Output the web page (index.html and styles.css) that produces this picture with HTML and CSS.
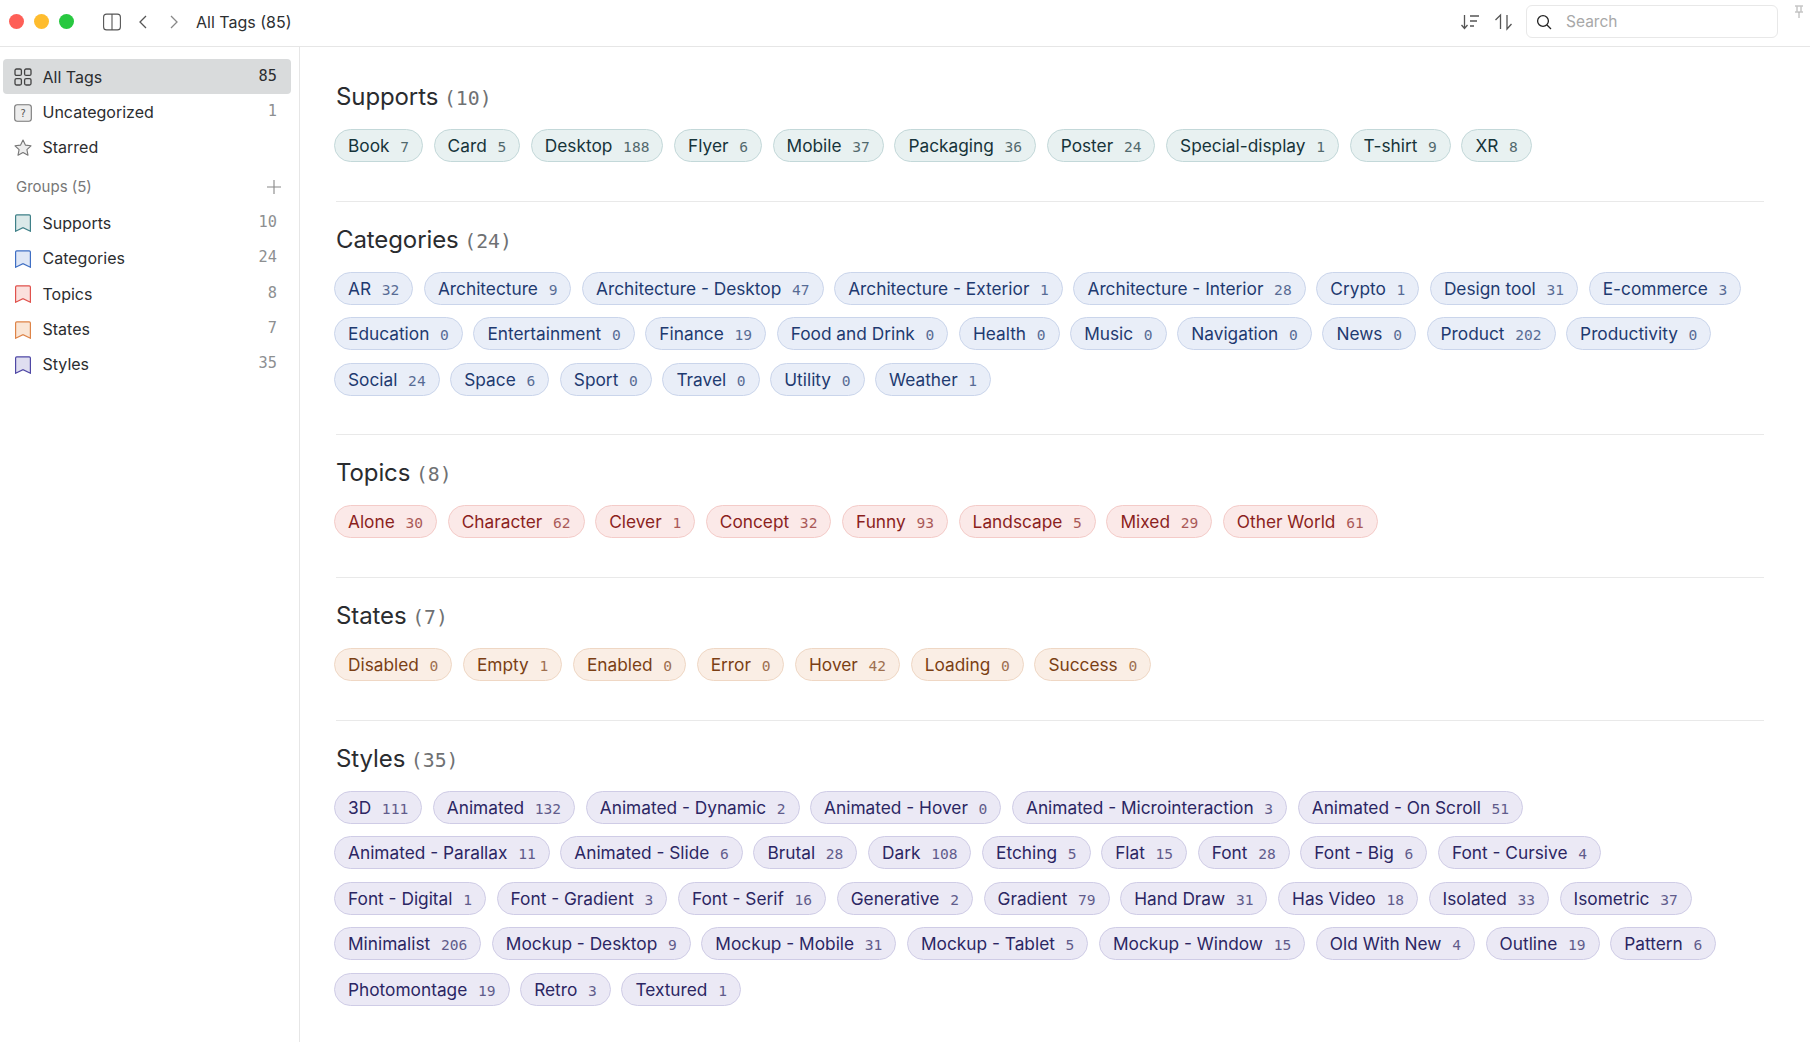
FILE: index.html
```html
<!DOCTYPE html>
<html lang="en">
<head>
<meta charset="utf-8">
<title>All Tags (85)</title>
<link rel="stylesheet" href="styles.css">
</head>
<body>
<div class="app">
  <header class="toolbar">
    <div class="lights"><span class="light red"></span><span class="light yellow"></span><span class="light green"></span></div>
    <svg class="tb-icon panel" viewBox="0 0 18 18" width="18" height="18"><rect x="0.6" y="1.1" width="16.8" height="15.8" rx="3" fill="none" stroke="#555" stroke-width="1.1"/><path d="M9 1.1V16.9" stroke="#555" stroke-width="1.1"/></svg>
    <svg class="tb-icon back" viewBox="0 0 10 16" width="10" height="16"><path d="M8 2 2 8l6 6" fill="none" stroke="#555" stroke-width="1.3"/></svg>
    <svg class="tb-icon fwd" viewBox="0 0 10 16" width="10" height="16"><path d="M2 2l6 6-6 6" fill="none" stroke="#888" stroke-width="1.3"/></svg>
    <div class="tb-title">All Tags (85)</div>
    <svg class="tb-icon sort1" viewBox="0 0 20 18" width="20" height="18"><path d="M4.500 2v13M1.500 12l3 3.500 3-3.500" fill="none" stroke="#555" stroke-width="1.300"/><path d="M10 3h9M10 8h7M10 13h4" stroke="#555" stroke-width="1.300"/></svg>
    <svg class="tb-icon sort2" viewBox="0 0 20 18" width="20" height="18"><path d="M6.500 16V2L1.500 7" fill="none" stroke="#555" stroke-width="1.300"/><path d="M13 2v14l4.500-5" fill="none" stroke="#555" stroke-width="1.300"/></svg>
    <div class="search">
      <svg viewBox="0 0 16 16" width="16" height="16"><circle cx="7" cy="7" r="5.4" fill="none" stroke="#222" stroke-width="1.3"/><path d="M11 11l4 4" stroke="#222" stroke-width="1.3"/></svg>
      <span>Search</span>
    </div>
    <svg class="pin" viewBox="0 0 10 14" width="10" height="14"><path d="M1 1h8M3 1.500v5M7 1.500v5M1 7h8M5 7v6" fill="none" stroke="#aaa" stroke-width="1"/></svg>
  </header>
  <div class="body">
    <aside class="sidebar">
      <div class="row active">
        <svg class="ico" viewBox="0 0 18 18" width="18" height="18"><g fill="none" stroke="#444" stroke-width="1.3"><rect x="1" y="1" width="6.400" height="6.400" rx="1.500"/><rect x="10.600" y="1" width="6.400" height="6.400" rx="1.500"/><rect x="1" y="10.600" width="6.400" height="6.400" rx="1.500"/><rect x="10.600" y="10.600" width="6.400" height="6.400" rx="1.500"/></g></svg>
        <span class="lbl">All Tags</span><span class="num dark">85</span>
      </div>
      <div class="row">
        <svg class="ico" viewBox="0 0 18 18" width="18" height="18"><rect x="0.7" y="0.7" width="16.600" height="16.600" rx="2.500" fill="#ededed" stroke="#777" stroke-width="1.100"/><text x="9" y="12.500" class="q">?</text></svg>
        <span class="lbl">Uncategorized</span><span class="num">1</span>
      </div>
      <div class="row">
        <svg class="ico" viewBox="0 0 18 18" width="18" height="18"><path d="M9 1l2.400 5.100 5.600.7-4.100 3.900 1.100 5.500L9 13.500l-5 2.700 1.100-5.500L1 6.800l5.600-.7z" fill="#ededed" stroke="#777" stroke-width="1.100" stroke-linejoin="round"/></svg>
        <span class="lbl">Starred</span>
      </div>
      <div class="groups"><span>Groups (5)</span><svg viewBox="0 0 14 14" width="14" height="14"><path d="M7 0v14M0 7h14" stroke="#888" stroke-width="1.100"/></svg></div>
      <div class="row"><svg class="ico mark teal" viewBox="0 0 18 18" width="18" height="18"><path d="M1.600 2q0-1.200 1.200-1.200h12.400q1.200 0 1.200 1.200v15.200l-7.400-3.600-7.400 3.600z"/></svg><span class="lbl">Supports</span><span class="num">10</span></div>
      <div class="row"><svg class="ico mark blue" viewBox="0 0 18 18" width="18" height="18"><path d="M1.600 2q0-1.200 1.200-1.200h12.400q1.200 0 1.200 1.200v15.200l-7.400-3.600-7.400 3.600z"/></svg><span class="lbl">Categories</span><span class="num">24</span></div>
      <div class="row"><svg class="ico mark rose" viewBox="0 0 18 18" width="18" height="18"><path d="M1.600 2q0-1.200 1.200-1.200h12.400q1.200 0 1.200 1.200v15.200l-7.400-3.600-7.400 3.600z"/></svg><span class="lbl">Topics</span><span class="num">8</span></div>
      <div class="row"><svg class="ico mark amber" viewBox="0 0 18 18" width="18" height="18"><path d="M1.600 2q0-1.200 1.200-1.200h12.400q1.200 0 1.200 1.200v15.200l-7.400-3.600-7.400 3.600z"/></svg><span class="lbl">States</span><span class="num">7</span></div>
      <div class="row"><svg class="ico mark violet" viewBox="0 0 18 18" width="18" height="18"><path d="M1.600 2q0-1.200 1.200-1.200h12.400q1.200 0 1.200 1.200v15.200l-7.400-3.600-7.400 3.600z"/></svg><span class="lbl">Styles</span><span class="num">35</span></div>
    </aside>
    <main class="main">
      <section class="group teal">
        <h2>Supports <span>(10)</span></h2>
        <div class="chips">
          <a class="chip">Book<i>7</i></a><a class="chip">Card<i>5</i></a><a class="chip">Desktop<i>188</i></a><a class="chip">Flyer<i>6</i></a><a class="chip">Mobile<i>37</i></a><a class="chip">Packaging<i>36</i></a><a class="chip">Poster<i>24</i></a><a class="chip">Special-display<i>1</i></a><a class="chip">T-shirt<i>9</i></a><a class="chip">XR<i>8</i></a>
        </div>
      </section>
      <section class="group blue">
        <h2>Categories <span>(24)</span></h2>
        <div class="chips">
          <a class="chip">AR<i>32</i></a><a class="chip">Architecture<i>9</i></a><a class="chip">Architecture - Desktop<i>47</i></a><a class="chip">Architecture - Exterior<i>1</i></a><a class="chip">Architecture - Interior<i>28</i></a><a class="chip">Crypto<i>1</i></a><a class="chip">Design tool<i>31</i></a><a class="chip">E-commerce<i>3</i></a><a class="chip">Education<i>0</i></a><a class="chip">Entertainment<i>0</i></a><a class="chip">Finance<i>19</i></a><a class="chip">Food and Drink<i>0</i></a><a class="chip">Health<i>0</i></a><a class="chip">Music<i>0</i></a><a class="chip">Navigation<i>0</i></a><a class="chip">News<i>0</i></a><a class="chip">Product<i>202</i></a><a class="chip">Productivity<i>0</i></a><a class="chip">Social<i>24</i></a><a class="chip">Space<i>6</i></a><a class="chip">Sport<i>0</i></a><a class="chip">Travel<i>0</i></a><a class="chip">Utility<i>0</i></a><a class="chip">Weather<i>1</i></a>
        </div>
      </section>
      <section class="group rose">
        <h2>Topics <span>(8)</span></h2>
        <div class="chips">
          <a class="chip">Alone<i>30</i></a><a class="chip">Character<i>62</i></a><a class="chip">Clever<i>1</i></a><a class="chip">Concept<i>32</i></a><a class="chip">Funny<i>93</i></a><a class="chip">Landscape<i>5</i></a><a class="chip">Mixed<i>29</i></a><a class="chip">Other World<i>61</i></a>
        </div>
      </section>
      <section class="group amber">
        <h2>States <span>(7)</span></h2>
        <div class="chips">
          <a class="chip">Disabled<i>0</i></a><a class="chip">Empty<i>1</i></a><a class="chip">Enabled<i>0</i></a><a class="chip">Error<i>0</i></a><a class="chip">Hover<i>42</i></a><a class="chip">Loading<i>0</i></a><a class="chip">Success<i>0</i></a>
        </div>
      </section>
      <section class="group violet">
        <h2>Styles <span>(35)</span></h2>
        <div class="chips">
          <a class="chip">3D<i>111</i></a><a class="chip">Animated<i>132</i></a><a class="chip">Animated - Dynamic<i>2</i></a><a class="chip">Animated - Hover<i>0</i></a><a class="chip">Animated - Microinteraction<i>3</i></a><a class="chip">Animated - On Scroll<i>51</i></a><a class="chip">Animated - Parallax<i>11</i></a><a class="chip">Animated - Slide<i>6</i></a><a class="chip">Brutal<i>28</i></a><a class="chip">Dark<i>108</i></a><a class="chip">Etching<i>5</i></a><a class="chip">Flat<i>15</i></a><a class="chip">Font<i>28</i></a><a class="chip">Font - Big<i>6</i></a><a class="chip">Font - Cursive<i>4</i></a><a class="chip">Font - Digital<i>1</i></a><a class="chip">Font - Gradient<i>3</i></a><a class="chip">Font - Serif<i>16</i></a><a class="chip">Generative<i>2</i></a><a class="chip">Gradient<i>79</i></a><a class="chip">Hand Draw<i>31</i></a><a class="chip">Has Video<i>18</i></a><a class="chip">Isolated<i>33</i></a><a class="chip">Isometric<i>37</i></a><a class="chip">Minimalist<i>206</i></a><a class="chip">Mockup - Desktop<i>9</i></a><a class="chip">Mockup - Mobile<i>31</i></a><a class="chip">Mockup - Tablet<i>5</i></a><a class="chip">Mockup - Window<i>15</i></a><a class="chip">Old With New<i>4</i></a><a class="chip">Outline<i>19</i></a><a class="chip">Pattern<i>6</i></a><a class="chip">Photomontage<i>19</i></a><a class="chip">Retro<i>3</i></a><a class="chip">Textured<i>1</i></a>
        </div>
      </section>
    </main>
  </div>
</div>
</body>
</html>
```
FILE: styles.css
```css
* { box-sizing: border-box; }
html, body { margin: 0; height: 100%; }
body { font-family: Inter, "Liberation Sans", sans-serif; color: #26282b; background: #fff; overflow: hidden; }
.app { height: 1042px; display: flex; flex-direction: column; }

.toolbar { height: 47px; flex: none; display: flex; align-items: center; border-bottom: 1px solid #e6e6e6; padding: 0 0 3px 9px; }
.lights { display: flex; gap: 10px; }
.light { width: 15px; height: 15px; border-radius: 50%; }
.light.red { background: #fe5f57; }
.light.yellow { background: #febc2e; }
.light.green { background: #28c840; }
.tb-icon { flex: none; }
.panel { margin-left: 29px; }
.back { margin-left: 17px; }
.fwd { margin-left: 21px; }
.tb-title { margin-left: 17px; font-size: 16px; color: #2d2f32; white-space: nowrap; flex: 1; }
.sort2 { margin-left: 14px; }
.search { margin-left: 12px; width: 252px; height: 33px; border: 1px solid #e8e8e8; border-radius: 6px; display: flex; align-items: center; padding-left: 9px; gap: 14px; font-size: 15.500px; color: #a8a8a8; }
.pin { align-self: flex-start; margin: 5px 6px 0 16px; flex: none; }

.body { flex: 1; display: flex; min-height: 0; }
.sidebar { width: 300px; flex: none; border-right: 1px solid #e6e6e6; padding: 12px 8px 0 3px; }
.row { height: 35.400px; display: flex; align-items: center; padding: 0 14px 0 11px; border-radius: 4px; font-size: 16px; color: #2b2d30; }
.row.active { background: #d9dbdc; }
.ico { flex: none; margin-right: 10.500px; margin-top: 1px; }
.lbl { flex: 1; }
.num { font-family: "DejaVu Sans Mono", "Liberation Mono", monospace; font-size: 15.300px; color: #8d8f91; margin-top: -2px; }
.num.dark { color: #2b2d30; }
.q { font-family: "DejaVu Sans Mono", monospace; font-size: 10px; fill: #555; text-anchor: middle; }
.groups { height: 37px; margin-top: 3px; display: flex; align-items: center; justify-content: space-between; padding: 0 10px 0 13px; font-size: 15px; color: #777; }
.mark path { stroke-width: 1.200; }
.mark.teal path { fill: #dbe9e9; stroke: #3f8088; }
.mark.blue path { fill: #dfe7f6; stroke: #3f6fc4; }
.mark.rose path { fill: #fbe0dd; stroke: #e0524d; }
.mark.amber path { fill: #fae6d6; stroke: #de8448; }
.mark.violet path { fill: #dfdef0; stroke: #4f48a5; }

.main { flex: 1; min-width: 0; padding: 12px 46px 0 36px; }
.group { padding: 17px 0 38.700px; border-bottom: 1px solid #e9e9e9; }
.group:last-child { border-bottom: 0; }
h2 { margin: 0 0 11px; font-size: 24px; line-height: 42px; height: 42px; font-weight: 400; color: #2a2c2f; letter-spacing: -0.100px; white-space: nowrap; }
h2 span { font-family: "DejaVu Sans Mono", monospace; font-size: 19.800px; color: #6f7173; letter-spacing: 0; margin-left: -1px; }
.chips { display: flex; flex-wrap: wrap; gap: 12.500px 10.600px; margin: 0 20px 0 -2px; }
.chip { height: 33px; border: 1px solid; border-radius: 17px; display: flex; align-items: center; padding: 0 13px; font-size: 17.300px; white-space: nowrap; }
.chip i { font-style: normal; font-family: "DejaVu Sans Mono", monospace; font-size: 14.600px; margin-left: 10.700px; opacity: .72; margin-top: 2px; }
.teal .chip { background: #e8f1f1; border-color: #c3d8d9; color: #16343a; }
.blue .chip { background: #e9eef8; border-color: #cad5eb; color: #1e3a70; }
.rose .chip { background: #fbe9e8; border-color: #f4cbc8; color: #8b1f1d; }
.amber .chip { background: #faeee5; border-color: #efd7c4; color: #7b3f14; }
.violet .chip { background: #ebe9f5; border-color: #cfcce6; color: #2b2663; }
```
